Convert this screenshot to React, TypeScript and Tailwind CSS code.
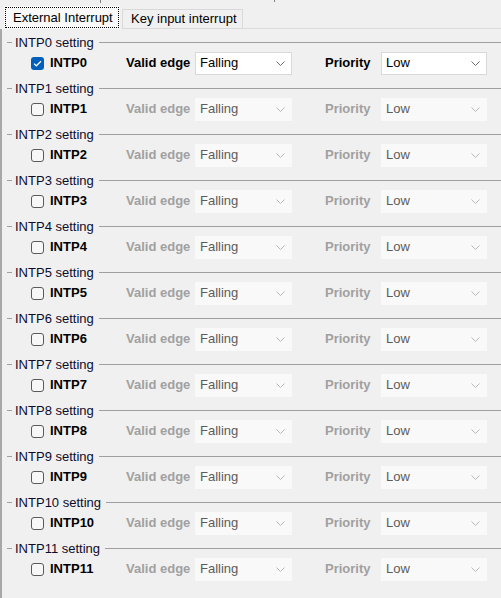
import React from "react";

function Chevron({ color }: { color: string }) {
  return (
    <svg width="9" height="5" viewBox="0 0 9 5" className="shrink-0">
      <path d="M0.5 0.5 L4.5 4.5 L8.5 0.5" fill="none" stroke={color} strokeWidth="1" />
    </svg>
  );
}

function Select({ value, width, enabled }: { value: string; width: string; enabled: boolean }) {
  return (
    <div
      className={
        "h-[23px] flex items-center justify-between pl-[4px] pr-[6px] " +
        width +
        (enabled ? " bg-white border border-[#d9d9d9]" : " bg-[#f9f9f9] border border-[#f9f9f9]")
      }
    >
      <span className={enabled ? "text-[13px] text-black" : "text-[13px] text-[#5c5c5c]"}>{value}</span>
      <Chevron color={enabled ? "#6a6a6a" : "#b8b8b8"} />
    </div>
  );
}

function Checkbox({ checked }: { checked: boolean }) {
  if (checked) {
    return (
      <div className="w-[13px] h-[13px] rounded-[3px] bg-[#005fb8] flex items-center justify-center shrink-0">
        <svg width="9" height="7" viewBox="0 0 9 7">
          <path d="M1 3.6 L3.3 5.8 L8 1.2" fill="none" stroke="white" strokeWidth="1.2" />
        </svg>
      </div>
    );
  }
  return <div className="w-[13px] h-[13px] rounded-[3px] border border-[#5a5a5a] bg-[#f7f7f7] shrink-0" />;
}

function Group({ i }: { i: number }) {
  const enabled = i === 0;
  const labelCls = enabled ? "text-black" : "text-[#a0a0a0]";
  return (
    <div className="mb-[4px]">
      <div className="h-[16px] flex items-center">
        <div className="ml-[5px] w-[5px] h-px bg-[#a0a0a0]" />
        <span className="ml-[3px] text-[13px] text-[#0c0c2a] leading-none">INTP{i} setting</span>
        <div className="ml-[5px] flex-1 h-px bg-[#a0a0a0]" />
      </div>
      <div className="h-[26px] flex items-center pl-[29px]">
        <Checkbox checked={enabled} />
        <span className="ml-[6px] w-[76px] text-[13px] font-bold text-black">INTP{i}</span>
        <span className={"w-[69px] text-[13px] font-bold " + labelCls}>Valid edge</span>
        <Select value="Falling" width="w-[97px]" enabled={enabled} />
        <div className="w-[33px]" />
        <span className={"w-[56px] text-[13px] font-bold " + labelCls}>Priority</span>
        <Select value="Low" width="w-[106px]" enabled={enabled} />
      </div>
    </div>
  );
}

export default function App() {
  const groups = Array.from({ length: 12 }, (_, i) => i);
  return (
    <div className="w-[501px] h-[598px] bg-[#f0f0f0] overflow-hidden relative font-['Liberation_Sans',Arial,sans-serif]">
      <div className="absolute left-[100px] top-0 w-px h-[3px] bg-[#808080]" />
      <div className="absolute left-[274px] top-0 w-px h-[2px] bg-[#808080]" />
      <div className="h-[29px] flex items-end">
        <div className="w-[4px] h-px self-end" />
        <div className="h-[23px] w-[116px] bg-[#f9f9f9] p-px">
          <div className="h-full border border-dotted border-black flex items-center pl-[7px] text-[13px] text-black">
            External Interrupt
          </div>
        </div>
        <div className="ml-[2px] h-[20px] w-[121px] border border-[#d9d9d9] bg-[#f0f0f0] flex items-center pl-[8px] text-[13px] text-black">
          Key input interrupt
        </div>
        <div className="flex-1 h-px bg-[#dcdcdc]" />
      </div>
      <div className="border-l-2 border-[#a8a8a8] h-full pt-[5px]">
        {groups.map((i) => (
          <Group key={i} i={i} />
        ))}
      </div>
    </div>
  );
}
